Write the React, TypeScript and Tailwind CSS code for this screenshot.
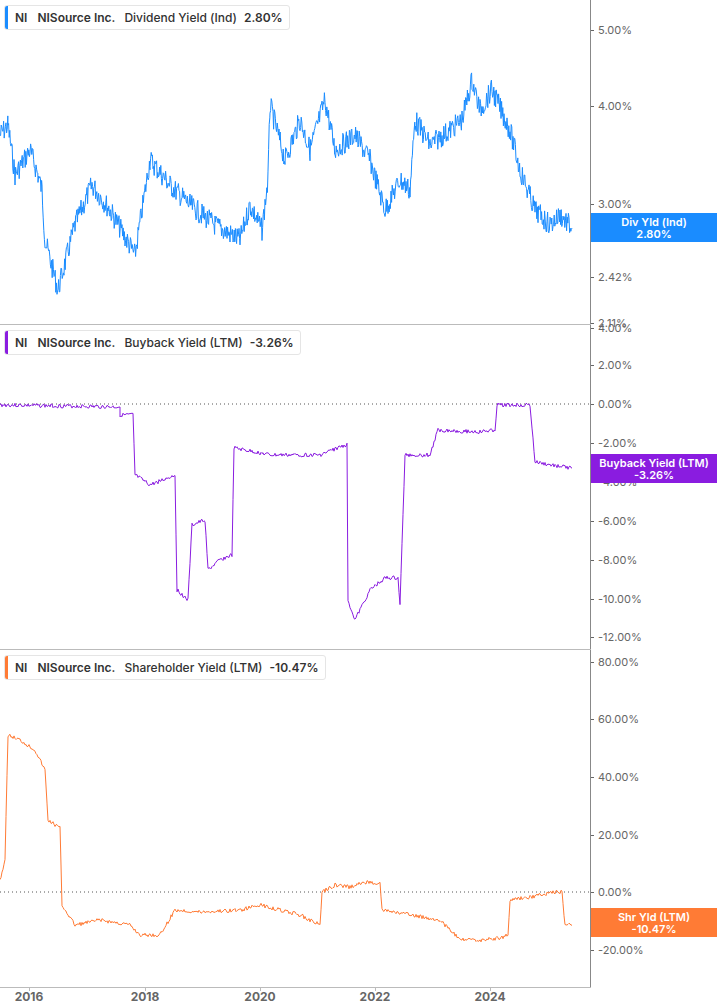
import React from "react";

type P = [number, number];
function rnd(seed: number) { let s = seed; return () => { s = (s * 9301 + 49297) % 233280; return s / 233280; }; }
function build(pts: P[], off: number, noise: number, seed: number, step = 1) {
  const r = rnd(seed); const out: string[] = [];
  for (let i = 0; i < pts.length - 1; i++) {
    const [x0, y0] = pts[i]; const [x1, y1] = pts[i + 1];
    if (x1 === x0) { out.push(`${x0},${y0 - off}`); continue; }
    for (let x = x0; x < x1; x += step) {
      const t = (x - x0) / (x1 - x0);
      out.push(`${x.toFixed(1)},${(y0 + (y1 - y0) * t - off + (r() - 0.5) * noise).toFixed(1)}`);
    }
  }
  const l = pts[pts.length - 1]; out.push(`${l[0]},${l[1] - off}`);
  return out.join(" ");
}

const div: P[] = [[0,135],[8,125],[15,175],[30,150],[38,175],[42,190],[45,240],[58,290],[75,225],[92,185],[110,210],[135,255],[150,160],[170,185],[190,205],[215,225],[240,240],[250,205],[262,230],[268,180],[270,105],[285,160],[300,120],[310,150],[325,100],[335,150],[355,135],[370,160],[385,210],[400,180],[410,190],[415,120],[430,145],[450,130],[462,120],[472,80],[480,110],[492,90],[510,130],[520,170],[535,210],[550,225],[560,215],[572,228]];
const bb: P[] = [[0,405],[120,407],[120,415],[133,415],[135,475],[150,485],[175,475],[177,590],[188,600],[192,525],[205,520],[208,570],[220,560],[232,555],[234,448],[270,455],[320,455],[345,445],[347,445],[348,600],[355,620],[370,590],[385,578],[398,578],[400,605],[405,455],[430,455],[438,430],[480,432],[495,430],[497,405],[530,405],[535,462],[550,465],[572,468]];
const sh: P[] = [[0,880],[5,860],[8,735],[20,740],[35,750],[45,770],[48,820],[60,828],[62,905],[75,925],[100,920],[130,925],[140,935],[160,935],[175,910],[200,912],[240,910],[260,905],[280,910],[300,915],[320,925],[322,892],[335,885],[350,887],[365,882],[380,883],[382,910],[410,915],[440,920],[460,940],[480,940],[500,938],[508,935],[510,900],[530,897],[550,893],[562,892],[565,925],[572,925]];

const font = { fontFamily: "Inter, 'Liberation Sans', sans-serif" };

function Header({ color, label, value }: { color: string; label: string; value: string }) {
  return (
    <div className="absolute left-[4px] top-[5px] flex h-[25px] items-center overflow-hidden rounded-[3px] border border-[#e5e5e5] bg-white pr-[6px] text-[12px] font-semibold text-[#333]">
      <div className="h-full w-[3px]" style={{ background: color }} />
      <span className="ml-[7px]">NI</span>
      <span className="ml-[10px]">NISource Inc.</span>
      <span className="ml-[9px] font-medium">{label}</span>
      <span className="ml-[7px]">{value}</span>
    </div>
  );
}

function Panel({ top, h, pts, noise, color, seed, zero, ticks, box, header, step }: any) {
  return (
    <div className="relative flex" style={{ height: h }}>
      <div className="relative w-[591px] border-r border-[#888]">
        <svg width="591" height={h} className="absolute left-0 top-0">
          {zero !== undefined && <line x1="0" x2="591" y1={zero - top} y2={zero - top} stroke="#555" strokeDasharray="1 3" />}
          <polyline points={build(pts, top, noise, seed, step)} fill="none" stroke={color} strokeWidth="1" />
          <line x1="0" x2="591" y1={h - 0.5} y2={h - 0.5} stroke="#bbb" />
        </svg>
        {header}
      </div>
      <div className="relative flex-1 text-[11px] text-[#666]">
        {ticks.map(([t, y]: [string, number]) => (
          <div key={t + y} className="absolute left-0 flex items-center" style={{ top: y - top - 8 }}>
            <span className="mr-[4px] h-px w-[3px] bg-[#666]" />{t}
          </div>
        ))}
        <div className="absolute left-0 right-0 flex flex-col items-center justify-center text-[11px] font-semibold leading-[12px] text-white" style={{ top: box.y - top, height: 29, background: color }}>
          <span>{box.a}</span><span>{box.b}</span>
        </div>
      </div>
    </div>
  );
}

export default function App() {
  return (
    <div className="h-[1005px] w-[717px] overflow-hidden bg-white" style={font}>
      <Panel top={0} h={325} pts={div} noise={22} color="#1a8cff" seed={7} step={0.6}
        ticks={[["5.00%", 30], ["4.00%", 106], ["3.00%", 204], ["2.42%", 277], ["2.11%", 323]]}
        box={{ y: 213, a: "Div Yld (Ind)", b: "2.80%" }}
        header={<Header color="#1a8cff" label="Dividend Yield (Ind)" value="2.80%" />} />
      <Panel top={325} h={325} pts={bb} noise={4} color="#8a1ce0" seed={3} zero={404}
        ticks={[["4.00%", 328], ["2.00%", 365], ["0.00%", 404], ["-2.00%", 443], ["-4.00%", 482], ["-6.00%", 521], ["-8.00%", 560], ["-10.00%", 599], ["-12.00%", 637]]}
        box={{ y: 454, a: "Buyback Yield (LTM)", b: "-3.26%" }}
        header={<Header color="#8a1ce0" label="Buyback Yield (LTM)" value="-3.26%" />} />
      <Panel top={650} h={338} pts={sh} noise={4} color="#ff7b35" seed={5} zero={892}
        ticks={[["80.00%", 662], ["60.00%", 719], ["40.00%", 777], ["20.00%", 835], ["0.00%", 892], ["-20.00%", 950]]}
        box={{ y: 908, a: "Shr Yld (LTM)", b: "-10.47%" }}
        header={<Header color="#ff7b35" label="Shareholder Yield (LTM)" value="-10.47%" />} />
      <div className="relative h-[17px] w-[591px] text-[12px] font-bold leading-[14px] text-[#666]">
        {[["2016", 29], ["2018", 145], ["2020", 260], ["2022", 375], ["2024", 490]].map(([t, x]) => (
          <React.Fragment key={t}>
            <div className="absolute top-0 h-[3px] w-px bg-[#bbb]" style={{ left: x as number }} />
            <div className="absolute top-[2px] -translate-x-1/2" style={{ left: x as number }}>{t}</div>
          </React.Fragment>
        ))}
      </div>
    </div>
  );
}
